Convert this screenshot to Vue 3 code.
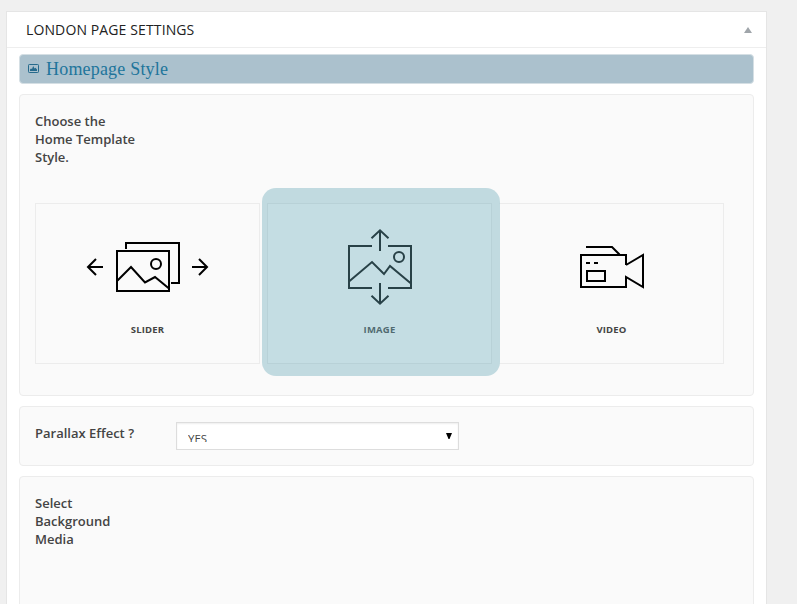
<script setup>
import { ref } from 'vue'

const options = [
  { id: 'slider', label: 'SLIDER', viewBox: '36 220 223 90' },
  { id: 'image', label: 'IMAGE', viewBox: '268 220 223 90' },
  { id: 'video', label: 'VIDEO', viewBox: '500 220 223 90' },
]
const selected = ref('image')
</script>

<template>
  <main class="page">
    <section class="panel">
      <header class="panel-header">
        <h3 class="panel-title">LONDON PAGE SETTINGS</h3>
        <svg class="toggle" width="8" height="6" viewBox="0 0 8 6"><path d="M0 6L4 0L8 6Z" /></svg>
      </header>

      <div class="panel-body">
        <div class="section-bar">
          <svg class="section-icon" width="11" height="9" viewBox="0 0 11 9">
            <rect x="0.5" y="0.5" width="10" height="8" rx="0.8" fill="none" stroke="currentColor" />
            <path d="M2 7V5.5L3 4.5L4 5L5.2 2L6.5 4.5L7.5 3.7L9 5.5V7Z" fill="currentColor" />
          </svg>
          <h2 class="section-title">Homepage Style</h2>
        </div>

        <div class="card style-card">
          <div class="label">Choose the Home Template Style.</div>
          <div class="options">
            <div
              v-for="o in options"
              :key="o.id"
              class="option"
              :class="{ selected: selected === o.id }"
              @click="selected = o.id"
            >
              <svg class="art" width="223" height="90" :viewBox="o.viewBox">
                <g v-if="o.id === 'slider'">
                  <path d="M126 249V243H179V283H171" />
                  <rect x="117" y="251" width="52" height="40" />
                  <circle cx="156" cy="264" r="5" />
                  <path d="M117.5 280.5L131 267L145 282.5L155 277L169 288.5" />
                  <path d="M103 267H88M96 259L88 267L96 275" />
                  <path d="M192 267H207M199 259L207 267L199 275" />
                </g>
                <g v-else-if="o.id === 'image'">
                  <path d="M372 246H349V288H372M388 246H411V288H388" />
                  <circle cx="399" cy="257" r="5" />
                  <path d="M349 281.5L372 262L384 274L390 266L411 283.5" />
                  <path d="M380 251V230.5M371.5 238.3L380 230.3L388.5 238.3" />
                  <path d="M380 283V303.5M371.5 295.7L380 303.7L388.5 295.7" />
                </g>
                <g v-else>
                  <path d="M586 247H612L619.5 254.5" />
                  <path d="M626 265V255H581V287H626V277L643 287V255L626 265" />
                  <path d="M586 263H590M594 263H598" />
                  <rect x="587" y="271" width="18" height="10" />
                </g>
              </svg>
              <span class="option-label">{{ o.label }}</span>
            </div>
          </div>
        </div>

        <div class="card parallax-card">
          <div class="label">Parallax Effect ?</div>
          <div class="select">
            <span class="select-value">YES</span>
            <svg width="6" height="6" viewBox="0 0 6 6"><path d="M0 0H6L3.5 6H2.5Z" /></svg>
          </div>
        </div>

        <div class="card media-card">
          <div class="label">Select Background Media</div>
        </div>
      </div>
    </section>
  </main>
</template>

<style>
body {
  background: #f0f0f0;
  overflow: hidden;
}
</style>

<style scoped>
* {
  box-sizing: border-box;
}
.page {
  height: 604px;
  padding: 11px 30px 0 6px;
  overflow: hidden;
  background: #f0f0f0;
  font-family: "Open Sans", "Noto Sans", sans-serif;
  color: #444;
}
.panel {
  height: 660px;
  background: #fff;
  border: 1px solid #e5e5e5;
}
.panel-header {
  display: flex;
  align-items: center;
  justify-content: space-between;
  height: 36px;
  padding: 0 14px 0 19px;
  border-bottom: 1px solid #eee;
}
.panel-title {
  margin: 0;
  font-size: 14px;
  font-weight: 400;
  line-height: 20px;
  letter-spacing: 0.12px;
  color: #222;
}
.toggle {
  margin-top: 1px;
  fill: #a0a5aa;
}
.panel-body {
  display: flex;
  flex-direction: column;
  gap: 10px;
  padding: 6px 12px 0;
}
.section-bar {
  display: flex;
  align-items: center;
  height: 30px;
  padding-left: 8px;
  gap: 7px;
  background: #abc1cd;
  border: 1px solid #d5dfe4;
  border-radius: 4px;
}
.section-icon {
  color: #266a8c;
  margin-bottom: 1px;
}
.section-title {
  margin: 0;
  font-family: "Liberation Serif", serif;
  font-size: 18px;
  font-weight: 400;
  line-height: 28px;
  letter-spacing: 0.19px;
  color: #21759b;
}
.card {
  background: #fafafa;
  border: 1px solid #ececec;
  border-radius: 4px;
  padding: 17px 15px 0;
}
.label {
  width: 105px;
  font-size: 13px;
  font-weight: 600;
  line-height: 18px;
}
.style-card {
  height: 302px;
}
.options {
  display: flex;
  gap: 7px;
  margin-top: 37px;
}
.option {
  position: relative;
  display: flex;
  flex-direction: column;
  align-items: center;
  width: 225px;
  height: 161px;
  padding-top: 16px;
  border: 1px solid #ececec;
}
.option.selected {
  z-index: 1;
  background: #fff;
}
.option.selected::after {
  content: "";
  position: absolute;
  inset: -16.5px -8.5px -13px -6px;
  border-radius: 14px;
  background: rgba(104, 168, 184, 0.39);
}
.option:last-child {
  border-left-color: transparent;
}
.art g {
  fill: none;
  stroke: #000;
  stroke-width: 2;
}
.option-label {
  margin-top: 12px;
  font-size: 9.5px;
  font-weight: 700;
  line-height: 15px;
  letter-spacing: 0.2px;
}
.parallax-card {
  display: flex;
  height: 60px;
}
.parallax-card .label {
  width: 141px;
}
.select {
  display: flex;
  align-items: center;
  justify-content: space-between;
  width: 283px;
  height: 28px;
  margin-top: -2px;
  padding: 0 6px 0 11px;
  background: #fff;
  border: 1px solid #ddd;
  box-shadow: inset 0 1px 2px rgba(0, 0, 0, 0.07);
}
.select-value {
  height: 11px;
  margin-top: 1px;
  overflow: hidden;
  font-size: 11.5px;
  line-height: 16px;
}
.media-card {
  height: 160px;
}
</style>
